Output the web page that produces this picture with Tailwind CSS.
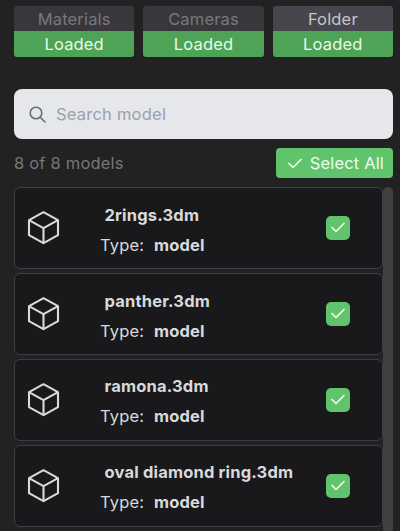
<!DOCTYPE html>
<html lang="en">
<head>
    <meta charset="UTF-8">
    <meta name="viewport" content="width=device-width, initial-scale=1.0">
    <title>Models</title>
    <script src="https://cdn.jsdelivr.net/npm/@tailwindcss/browser@4"></script>
</head>
<body class="h-screen overflow-hidden flex flex-col bg-[#222222] pl-3.5 pr-[7px] pt-1.5 font-['Inter',sans-serif] text-[16.5px] tracking-[0.16px] text-[#d9d9dc]">
    <!-- Load status -->
    <div class="flex gap-[9px] shrink-0 text-center">
        <div class="flex-1 h-[51px] rounded-[3px] overflow-hidden">
            <div class="h-[25px] leading-[26px] bg-[#38373c] text-[#78777b]">Materials</div>
            <div class="h-[26px] leading-[27px] bg-[#4ea357] text-[#e6fbe8]">Loaded</div>
        </div>
        <div class="flex-1 h-[51px] rounded-[3px] overflow-hidden">
            <div class="h-[25px] leading-[26px] bg-[#38373c] text-[#78777b]">Cameras</div>
            <div class="h-[26px] leading-[27px] bg-[#4ea357] text-[#e6fbe8]">Loaded</div>
        </div>
        <div class="flex-1 h-[51px] rounded-[3px] overflow-hidden">
            <div class="h-[25px] leading-[26px] bg-[#47464d] text-[#c6c5ca]">Folder</div>
            <div class="h-[26px] leading-[27px] bg-[#4ea357] text-[#e6fbe8]">Loaded</div>
        </div>
    </div>

    <!-- Search -->
    <div class="mt-8 h-[50px] shrink-0 flex items-center gap-[10px] pl-[15px] rounded-lg bg-[#e5e7eb]">
        <svg class="size-[17px] text-[#696d78]" viewBox="0 0 17 17" fill="none" stroke="currentColor" stroke-width="1.6" stroke-linecap="round">
            <circle cx="7" cy="7" r="5.8"></circle>
            <path d="M11.2 11.2L16 16"></path>
        </svg>
        <span class="text-[#9ca0ac] tracking-[0.22px]">Search model</span>
    </div>

    <div class="mt-[9px] h-[30px] shrink-0 flex items-center justify-between">
        <span class="text-[#77777a] tracking-[0.2px]">8 of 8 models</span>
        <button class="h-[30px] w-[117px] flex items-center justify-end gap-2 pr-[9px] rounded-[4px] bg-[#60c46c] text-[#edfdef]">
            <svg class="w-[14px] h-[11px]" viewBox="0 0 14 11" fill="none" stroke="currentColor" stroke-width="1.7" stroke-linecap="round" stroke-linejoin="round">
                <path d="M1 5.5L5 9.5L13 1.5"></path>
            </svg>
            <span class="whitespace-nowrap">Select All</span>
        </button>
    </div>

    <!-- Model list -->
    <div class="mt-[9px] flex-1 min-h-0 flex overflow-hidden">
        <div id="modelList" class="w-[369px] flex flex-col gap-1"></div>
        <div class="w-[10px] rounded-t-[5px] bg-[#404040]"></div>
    </div>

    <script>
        const models = ['2rings.3dm', 'panther.3dm', 'ramona.3dm', 'oval diamond ring.3dm'];

        document.getElementById('modelList').innerHTML = models.map((name) => `
            <div class="h-[81.9px] shrink-0 flex items-center border border-[#3a3f4a] rounded-md bg-[#19191b]">
                <svg class="ml-3 w-[34px] h-[34px] shrink-0" viewBox="0 0 34 34" fill="none" stroke="currentColor" stroke-width="2.1" stroke-linejoin="round">
                    <path d="M16.5 1.2L31 9.2V24.2L16.5 32.2L2 24.2V9.2Z"></path>
                    <path d="M2 9.2L16.5 17.2L31 9.2M16.5 17.2V32.2"></path>
                </svg>
                <div class="ml-[39px] pt-[3.4px] flex-1 leading-[30px] whitespace-nowrap">
                    <div class="pl-[4.5px] font-bold tracking-[0.18px]">${name}</div>
                    <div>Type: <span class="ml-[5px] font-bold">model</span></div>
                </div>
                <div class="mr-8 size-6 shrink-0 flex items-center justify-center rounded-[5px] bg-[#60c46c]">
                    <svg class="w-[14px] h-[11px] text-[#edfdef]" viewBox="0 0 14 11" fill="none" stroke="currentColor" stroke-width="1.7" stroke-linecap="round" stroke-linejoin="round">
                        <path d="M1 5.5L5 9.5L13 1.5"></path>
                    </svg>
                </div>
            </div>
        `).join('');
    </script>
</body>
</html>
